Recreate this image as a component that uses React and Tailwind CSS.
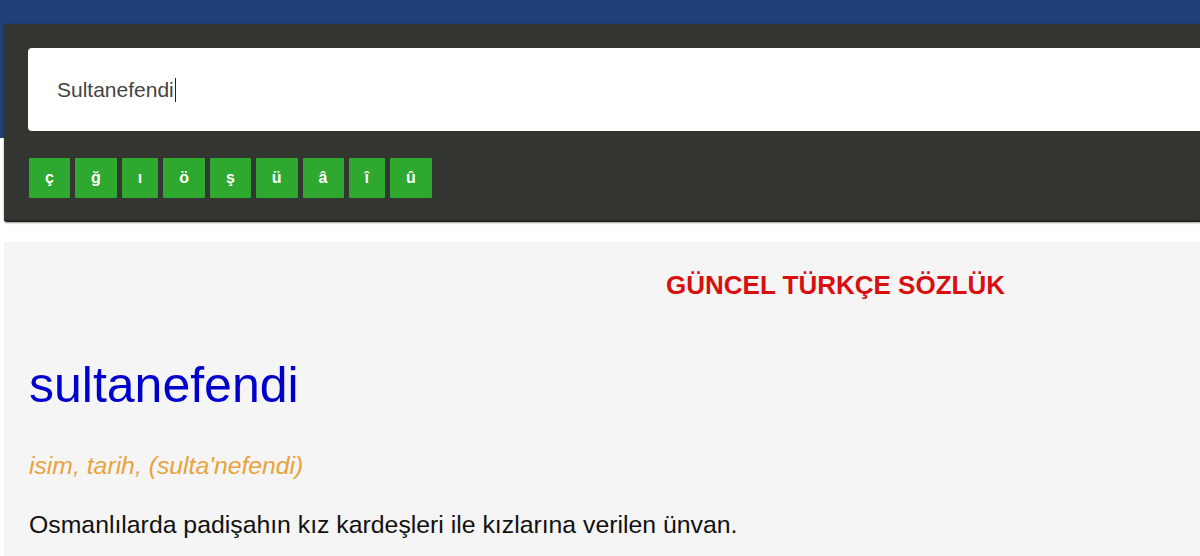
import React from "react";

const letters = ["ç", "ğ", "ı", "ö", "ş", "ü", "â", "î", "û"];

export default function App() {
  return (
    <div className="w-[1200px] h-[556px] overflow-hidden bg-white font-['Liberation_Sans',Arial,sans-serif]">
      {/* blue header with the search panel over it */}
      <div className="pt-[24px] pl-[4px] bg-[linear-gradient(to_bottom,#1f4079_0px,#1f4079_138px,#ffffff_138px)]">
        <div className="bg-[#333530] rounded-l-[3px] border-b-2 border-[#222420] shadow-[0_1px_2px_rgba(0,0,0,0.4)] pt-[24px] pb-[22px] pl-[24px]">
          <div className="h-[83px] bg-white rounded-l-[4px] flex items-center pl-[29px]">
            <span className="text-[21px] text-[#444] leading-none">Sultanefendi</span>
            <span className="w-px h-[24px] bg-[#222] ml-px"></span>
          </div>
          <div className="flex gap-[5px] mt-[27px] ml-px">
            {letters.map((l) => (
              <button
                key={l}
                className="h-[40px] px-4 bg-[#2ea82e] text-white font-bold text-[16px] rounded-[1px]"
              >
                {l}
              </button>
            ))}
          </div>
        </div>
      </div>

      <div className="mt-[20px] ml-[4px] bg-[#f5f5f5] h-[400px] pt-[28px] pl-[25px]">
        <h3 className="pl-[637px] text-[26px] leading-[30px] font-bold text-[#d90f0f]">
          GÜNCEL TÜRKÇE SÖZLÜK
        </h3>
        <h1 className="mt-[57px] text-[50px] leading-[57px] text-[#0000cc]">sultanefendi</h1>
        <p className="mt-[38px] text-[24.75px] leading-[28px] italic text-[#e9a33c]">
          isim, tarih, (sulta'nefendi)
        </p>
        <p className="mt-[30px] text-[24.8px] leading-[30px] text-[#111]">
          Osmanlılarda padişahın kız kardeşleri ile kızlarına verilen ünvan.
        </p>
      </div>
    </div>
  );
}
